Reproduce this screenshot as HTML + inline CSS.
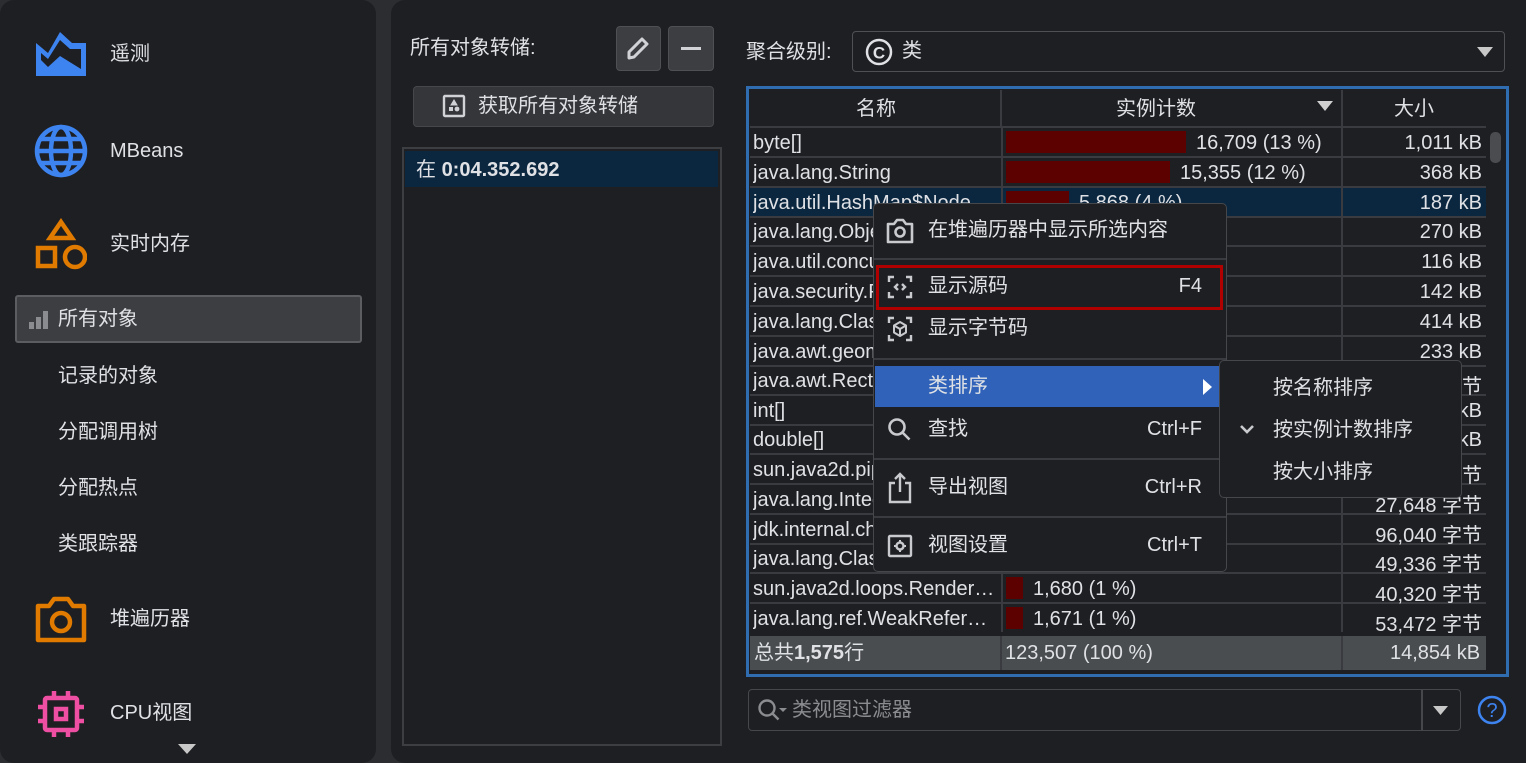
<!DOCTYPE html>
<html><head><meta charset="utf-8">
<style>
*{margin:0;padding:0;box-sizing:border-box}
body{width:1526px;height:763px;background:#2b2d30;font-family:"Liberation Sans","Noto Sans CJK SC",sans-serif;color:#dfe1e5;font-size:20px;overflow:hidden;position:relative}
.a{position:absolute}
.panel{background:#1e1f22;border-radius:14px}
.t{position:absolute;white-space:nowrap;line-height:1}
.row{position:absolute;left:750px;width:736px;height:30px;border-bottom:2px solid #393b40}
.row .n{position:absolute;left:3px;top:4px;width:246px;overflow:hidden;white-space:nowrap}
.row .c{position:absolute;left:251px;top:0;width:340px;height:28px;border-left:2px solid #393b40}
.row .s{position:absolute;left:591px;top:0;width:145px;height:28px;border-left:2px solid #393b40;text-align:right;padding-right:4px;padding-top:4px}
.bar{position:absolute;left:3px;top:3px;height:22px;background:#5c0000}
.cv{position:absolute;top:4px;white-space:nowrap}
.mi{position:absolute;left:0;width:100%;height:40px}
.mi .l{position:absolute;left:54px;top:9px}
.mi .r{position:absolute;right:24px;top:9px}
.sep{position:absolute;left:0;width:100%;height:2px;background:#393b40}
</style></head><body>
<!-- left panel -->
<div class="a panel" style="left:0;top:0;width:376px;height:763px"></div>
<svg class="a" style="left:36px;top:32px" width="50" height="46" viewBox="0 0 50 46"><path d="M0 44V11l12 10L24 0l12 11h14v33z" fill="#3d84f0"/><path d="M5 21l7 6 12-19 10 9h11v20L24 24 12 35 5 28z" fill="#1e1f22"/></svg>
<div class="t" style="left:110px;top:44px">遥测</div>
<svg class="a" style="left:34px;top:124px" width="54" height="54" viewBox="0 0 54 54" fill="none" stroke="#3d84f0" stroke-width="4.5"><circle cx="27" cy="27" r="24"/><ellipse cx="27" cy="27" rx="10" ry="24"/><path d="M3 27h48M7 15h40M7 39h40"/></svg>
<div class="t" style="left:110px;top:141px">MBeans</div>
<svg class="a" style="left:35px;top:218px" width="52" height="52" viewBox="0 0 52 52" fill="none" stroke="#e07b00" stroke-width="4.5"><path d="M26 4l11 16H15z"/><rect x="3" y="30" width="17" height="18"/><circle cx="40" cy="39" r="10"/></svg>
<div class="t" style="left:110px;top:234px">实时内存</div>
<div class="a" style="left:15px;top:295px;width:347px;height:48px;background:#3c3e42;border:2px solid #5b5d61;border-radius:3px"></div>
<svg class="a" style="left:28px;top:310px" width="20" height="20"><rect x="1" y="12" width="5" height="7" fill="#8a8c90"/><rect x="8" y="7" width="5" height="12" fill="#8a8c90"/><rect x="15" y="1" width="5" height="18" fill="#8a8c90"/></svg>
<div class="t" style="left:58px;top:309px">所有对象</div>
<div class="t" style="left:58px;top:366px">记录的对象</div>
<div class="t" style="left:58px;top:422px">分配调用树</div>
<div class="t" style="left:58px;top:478px">分配热点</div>
<div class="t" style="left:58px;top:534px">类跟踪器</div>
<svg class="a" style="left:34px;top:594px" width="54" height="50" viewBox="0 0 54 50" fill="none" stroke="#e07b00" stroke-width="4.5"><path d="M4 12h11l5-7h14l5 7h11v34H4z" stroke-linejoin="round"/><circle cx="27" cy="28" r="9"/></svg>
<div class="t" style="left:110px;top:609px">堆遍历器</div>
<svg class="a" style="left:36px;top:689px" width="50" height="50" viewBox="0 0 50 50" fill="none" stroke="#ee4fa3" stroke-width="4.5"><rect x="9" y="9" width="32" height="32" rx="2"/><rect x="20" y="20" width="10" height="10"/><path d="M18 2v7M32 2v7M18 41v7M32 41v7M2 18h7M2 32h7M41 18h7M41 32h7"/></svg>
<div class="t" style="left:110px;top:703px">CPU视图</div>
<svg class="a" style="left:178px;top:744px" width="18" height="10"><path d="M0 0h18L9 10z" fill="#c8c8c8"/></svg>

<!-- right panel -->
<div class="a panel" style="left:391px;top:0;width:1150px;height:763px"></div>
<div class="t" style="left:410px;top:38px">所有对象转储:</div>
<div class="a" style="left:616px;top:26px;width:45px;height:45px;background:#3c3e42;border:1px solid #4e5054;border-radius:4px"></div>
<svg class="a" style="left:624px;top:34px" width="28" height="28" viewBox="0 0 28 28" fill="none" stroke="#d0d2d5" stroke-width="3"><path d="M5 24V18L18 5l5 5L10 23z" stroke-linejoin="round"/></svg>
<div class="a" style="left:668px;top:26px;width:46px;height:45px;background:#3c3e42;border:1px solid #4e5054;border-radius:4px"></div>
<div class="a" style="left:681px;top:47px;width:20px;height:3px;background:#d0d2d5"></div>
<div class="a" style="left:413px;top:86px;width:301px;height:41px;background:#343639;border:1px solid #45474b;border-radius:4px"></div>
<svg class="a" style="left:442px;top:94px" width="24" height="24" viewBox="0 0 24 24" fill="none" stroke="#d0d2d5" stroke-width="2.4"><rect x="2" y="2" width="20" height="20" rx="1"/><path d="M12 6l3 5H9z" fill="#d0d2d5" stroke-width="1"/><rect x="7" y="13" width="4" height="4" fill="#d0d2d5" stroke="none"/><circle cx="15" cy="15" r="2.4" fill="#d0d2d5" stroke="none"/></svg>
<div class="t" style="left:478px;top:96px">获取所有对象转储</div>
<div class="a" style="left:402px;top:147px;width:320px;height:599px;border:2px solid #3c3e42;background:#1e1f22"></div>
<div class="a" style="left:405px;top:151px;width:313px;height:36px;background:#0b2740"></div>
<div class="t" style="left:416px;top:160px">在 <b>0:04.352.692</b></div>

<div class="t" style="left:746px;top:42px">聚合级别:</div>
<div class="a" style="left:852px;top:31px;width:653px;height:41px;border:1.5px solid #4e5054;border-radius:4px;background:#1e1f22"></div>
<svg class="a" style="left:865px;top:38px" width="28" height="28" viewBox="0 0 28 28"><circle cx="14" cy="14" r="12" fill="none" stroke="#dfe1e5" stroke-width="2.5"/><text x="14" y="20.5" font-size="17" font-weight="bold" text-anchor="middle" fill="#dfe1e5" font-family="Liberation Sans">C</text></svg>
<div class="t" style="left:902px;top:41px">类</div>
<svg class="a" style="left:1477px;top:47px" width="16" height="10"><path d="M0 0h16L8 10z" fill="#c8c8c8"/></svg>

<!-- table -->
<div class="a" style="left:746px;top:86px;width:763px;height:591px;border:3px solid #2f6db0;background:#1e1f22"></div>
<div class="a" style="left:750px;top:90px;width:736px;height:38px;border-bottom:2px solid #393b40"></div>
<div class="a" style="left:1000px;top:90px;width:2px;height:38px;background:#393b40"></div>
<div class="a" style="left:1341px;top:90px;width:2px;height:38px;background:#393b40"></div>
<div class="t" style="left:856px;top:99px">名称</div>
<div class="t" style="left:1116px;top:99px">实例计数</div>
<svg class="a" style="left:1317px;top:101px" width="16" height="10"><path d="M0 0h16L8 10z" fill="#d0d0d0"/></svg>
<div class="t" style="left:1394px;top:99px">大小</div>
<div class="a" style="left:1486px;top:90px;width:19px;height:546px;background:#1e1f22"></div>
<div class="a" style="left:1490px;top:132px;width:11px;height:31px;background:#4a4c50;border-radius:5px"></div>

<div class="row" style="top:128px"><div class="n">byte[]</div><div class="c"><div class="bar" style="width:180px"></div><div class="cv" style="left:193px">16,709 (13 %)</div></div><div class="s">1,011 kB</div></div>
<div class="row" style="top:158px"><div class="n">java.lang.String</div><div class="c"><div class="bar" style="width:164px"></div><div class="cv" style="left:177px">15,355 (12 %)</div></div><div class="s">368 kB</div></div>
<div class="row" style="top:188px;background:#0b2740"><div class="n">java.util.HashMap$Node</div><div class="c"><div class="bar" style="width:63px"></div><div class="cv" style="left:76px">5,868 (4 %)</div></div><div class="s">187 kB</div></div>
<div class="row" style="top:217px"><div class="n">java.lang.Object[]</div><div class="c"></div><div class="s">270 kB</div></div>
<div class="row" style="top:247px"><div class="n">java.util.concurrent</div><div class="c"></div><div class="s">116 kB</div></div>
<div class="row" style="top:277px"><div class="n">java.security.Pro</div><div class="c"></div><div class="s">142 kB</div></div>
<div class="row" style="top:307px"><div class="n">java.lang.Class</div><div class="c"></div><div class="s">414 kB</div></div>
<div class="row" style="top:337px"><div class="n">java.awt.geom</div><div class="c"></div><div class="s">233 kB</div></div>
<div class="row" style="top:366px"><div class="n">java.awt.Rectangle</div><div class="c"></div><div class="s">字节</div></div>
<div class="row" style="top:396px"><div class="n">int[]</div><div class="c"></div><div class="s">kB</div></div>
<div class="row" style="top:425px"><div class="n">double[]</div><div class="c"></div><div class="s">kB</div></div>
<div class="row" style="top:455px"><div class="n">sun.java2d.pipe</div><div class="c"></div><div class="s">字节</div></div>
<div class="row" style="top:485px"><div class="n">java.lang.Integer</div><div class="c"></div><div class="s">27,648 字节</div></div>
<div class="row" style="top:515px"><div class="n">jdk.internal.chars</div><div class="c"></div><div class="s">96,040 字节</div></div>
<div class="row" style="top:544px"><div class="n">java.lang.Class</div><div class="c"></div><div class="s">49,336 字节</div></div>
<div class="row" style="top:574px"><div class="n">sun.java2d.loops.Render…</div><div class="c"><div class="bar" style="width:17px"></div><div class="cv" style="left:30px">1,680 (1 %)</div></div><div class="s">40,320 字节</div></div>
<div class="row" style="top:604px;border-bottom:none"><div class="n">java.lang.ref.WeakRefer…</div><div class="c"><div class="bar" style="width:17px"></div><div class="cv" style="left:30px">1,671 (1 %)</div></div><div class="s">53,472 字节</div></div>
<div class="a" style="left:750px;top:636px;width:736px;height:34px;background:#4a4d50"></div>
<div class="a" style="left:1000px;top:636px;width:2px;height:34px;background:#393b40"></div>
<div class="a" style="left:1341px;top:636px;width:2px;height:34px;background:#393b40"></div>
<div class="t" style="left:754px;top:643px">总共<b>1,575</b>行</div>
<div class="t" style="left:1005px;top:643px">123,507 (100 %)</div>
<div class="t" style="left:1390px;top:643px">14,854 kB</div>

<!-- filter -->
<div class="a" style="left:748px;top:689px;width:713px;height:42px;border:1.5px solid #45474b;border-radius:4px;background:#1e1f22"></div>
<div class="a" style="left:1421px;top:690px;width:1.5px;height:40px;background:#45474b"></div>
<svg class="a" style="left:757px;top:698px" width="32" height="26" viewBox="0 0 32 26" fill="none" stroke="#8a8c90" stroke-width="2.4"><circle cx="10" cy="10" r="7.5"/><path d="M15.5 15.5l6 6"/><path d="M22 10h8l-4 4z" fill="#8a8c90" stroke="none"/></svg>
<div class="t" style="left:792px;top:700px;color:#8a8c90">类视图过滤器</div>
<svg class="a" style="left:1433px;top:706px" width="15" height="9"><path d="M0 0h15L7.5 9z" fill="#c8c8c8"/></svg>
<svg class="a" style="left:1477px;top:695px" width="30" height="30" viewBox="0 0 30 30"><circle cx="15" cy="15" r="13" fill="none" stroke="#3d84f0" stroke-width="2.5"/><text x="15" y="22" font-size="20" text-anchor="middle" fill="#3d84f0" font-family="Liberation Sans">?</text></svg>

<!-- context menu -->
<div class="a" style="left:873px;top:203px;width:354px;height:369px;background:#1e1f22;border:1.5px solid #45474b;border-radius:5px">
  <div class="mi" style="top:7px"><svg class="a" style="left:12px;top:7px" width="28" height="26" viewBox="0 0 28 26" fill="none" stroke="#c8cacd" stroke-width="2.6"><path d="M2 6h6l3-4h6l3 4h6v18H2z" stroke-linejoin="round"/><circle cx="14" cy="14" r="4.5"/></svg><div class="l t">在堆遍历器中显示所选内容</div></div>
  <div class="sep" style="top:54px"></div>
  <div class="a" style="left:2px;top:61px;width:347px;height:45px;border:3.5px solid #b00000"></div>
  <div class="mi" style="top:63px"><svg class="a" style="left:13px;top:8px" width="26" height="24" viewBox="0 0 26 24" fill="none" stroke="#c8cacd" stroke-width="2.4"><path d="M2 7V2h5M19 2h5v5M2 17v5h5M19 22h5v-5M11 9l-3 3 3 3M15 9l3 3-3 3"/></svg><div class="l t">显示源码</div><div class="r t">F4</div></div>
  <div class="mi" style="top:105px"><svg class="a" style="left:13px;top:7px" width="26" height="26" viewBox="0 0 26 26" fill="none" stroke="#c8cacd" stroke-width="2.4"><path d="M2 7V2h5M19 2h5v5M2 19v5h5M19 24h5v-5"/><path d="M13 6l6 3.5v7L13 20l-6-3.5v-7zM7 9.5l6 3.5 6-3.5M13 13v7" stroke-width="2" stroke-linejoin="round"/></svg><div class="l t">显示字节码</div></div>
  <div class="sep" style="top:154px"></div>
  <div class="a" style="left:1px;top:162px;width:344px;height:41px;background:#2f62b8"></div>
  <div class="t" style="left:54px;top:172px">类排序</div>
  <svg class="a" style="left:329px;top:175px" width="9" height="16"><path d="M0 0l9 8-9 8z" fill="#fff"/></svg>
  <div class="mi" style="top:206px"><svg class="a" style="left:13px;top:7px" width="26" height="26" viewBox="0 0 26 26" fill="none" stroke="#c8cacd" stroke-width="2.6"><circle cx="10" cy="10" r="7.5"/><path d="M15.5 15.5l7 7"/></svg><div class="l t">查找</div><div class="r t">Ctrl+F</div></div>
  <div class="sep" style="top:254px"></div>
  <div class="mi" style="top:264px"><svg class="a" style="left:14px;top:4px" width="24" height="32" viewBox="0 0 24 32" fill="none" stroke="#c8cacd" stroke-width="2.4"><path d="M7 11H2v19h20V11h-5M12 2v18M7 7l5-5 5 5"/></svg><div class="l t">导出视图</div><div class="r t">Ctrl+R</div></div>
  <div class="sep" style="top:312px"></div>
  <div class="mi" style="top:322px"><svg class="a" style="left:13px;top:7px" width="26" height="26" viewBox="0 0 26 26" fill="none" stroke="#c8cacd" stroke-width="2.4"><rect x="2" y="3" width="22" height="20" rx="1"/><circle cx="13" cy="13" r="3.5"/><path d="M13 7v2M13 17v2M7 13h2M17 13h2" stroke-width="2"/></svg><div class="l t">视图设置</div><div class="r t">Ctrl+T</div></div>
</div>
<!-- submenu -->
<div class="a" style="left:1219px;top:360px;width:243px;height:138px;background:#1e1f22;border:1.5px solid #45474b;border-radius:5px">
  <div class="t" style="left:53px;top:17px">按名称排序</div>
  <svg class="a" style="left:19px;top:63px" width="16" height="11"><path d="M2 2l6 6 6-6" fill="none" stroke="#c8cacd" stroke-width="2.6"/></svg>
  <div class="t" style="left:53px;top:59px">按实例计数排序</div>
  <div class="t" style="left:53px;top:101px">按大小排序</div>
</div>
</body></html>
